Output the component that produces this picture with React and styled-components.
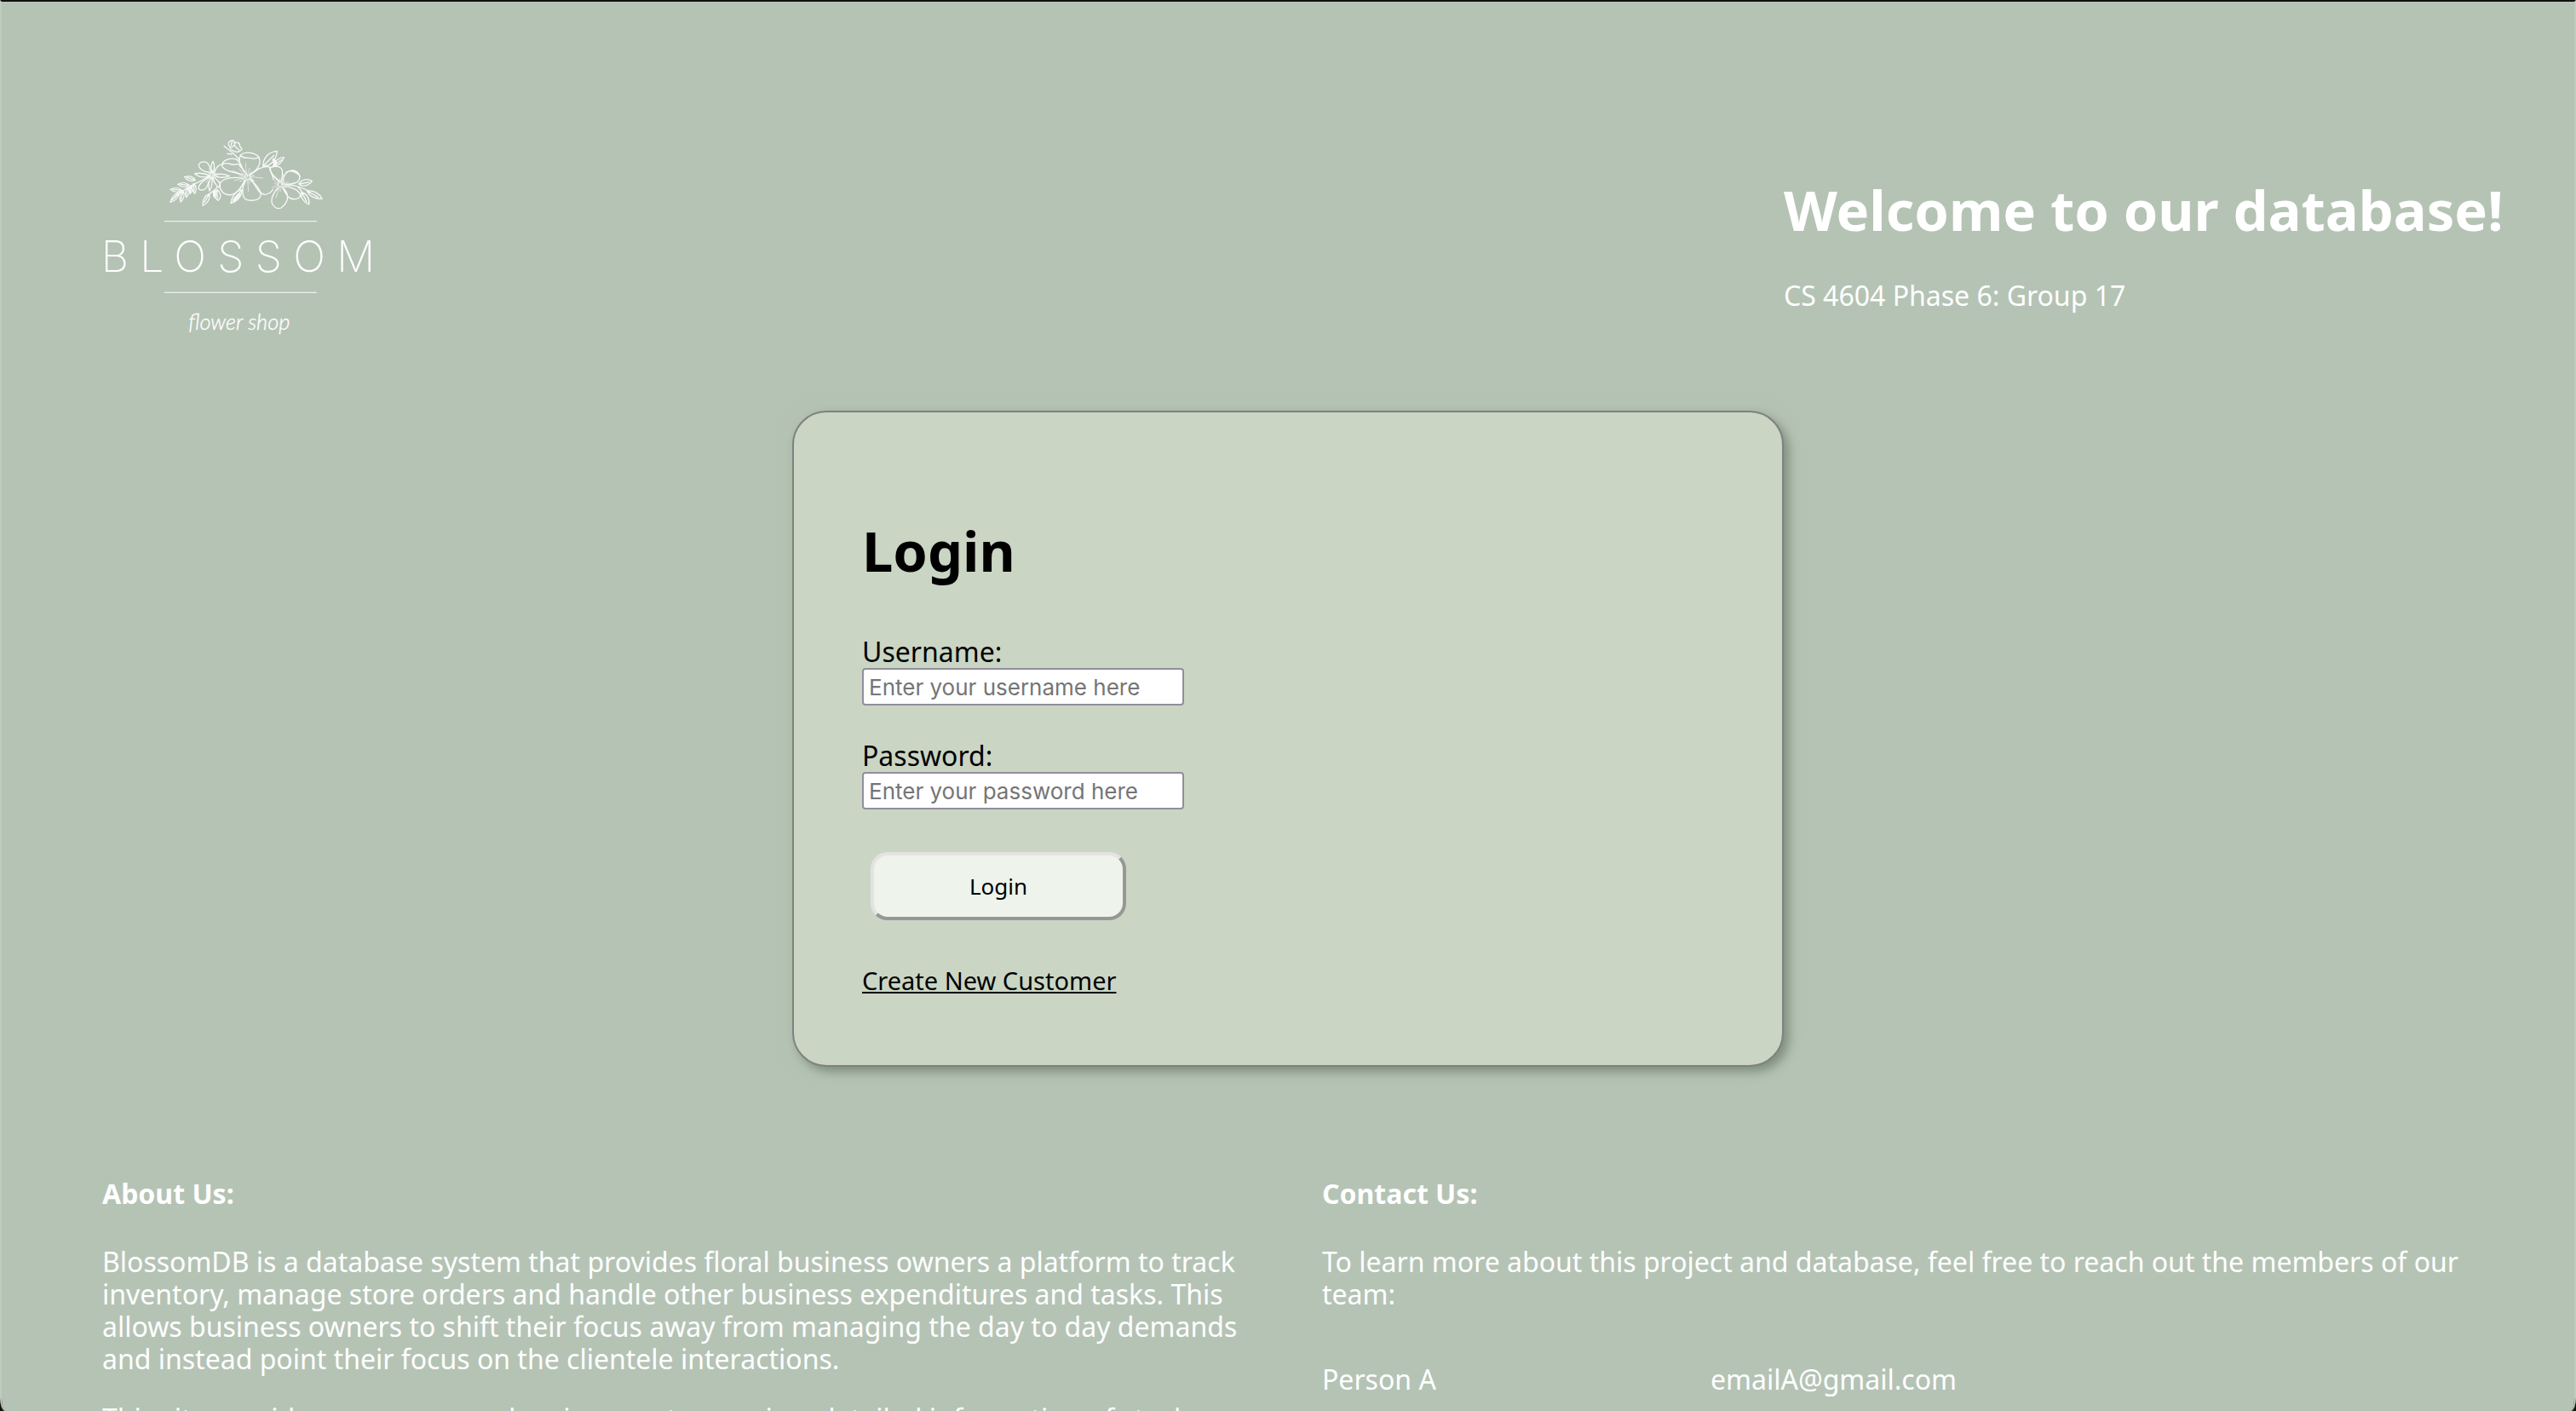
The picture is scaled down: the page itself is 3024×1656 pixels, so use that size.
import React from "react";
import styled, { createGlobalStyle } from "styled-components";

const GlobalStyle = createGlobalStyle`
  *, *::before, *::after { box-sizing: border-box; }
  html { background: #14100f; }
  body {
    margin: 0;
    font-family: "Lucida Sans", "Lucida Grande", "Noto Sans", sans-serif;
    font-size: 32px;
    line-height: 38px;
    color: #fff;
  }
`;

const Page = styled.div`
  height: 100vh;
  overflow-y: auto;
  scrollbar-width: none;
  background: #b5c3b5;
  border: 2px solid #bfccc0;
  border-top-color: #14100f;
  border-bottom: 0;
  border-radius: 0 0 6px 6px / 0 0 16px 16px;
`;

const Header = styled.header`
  display: flex;
  justify-content: space-between;
  align-items: flex-start;
  padding: 158px 78px 78px 118px;
`;

const Logo = styled.svg`
  display: block;
  width: 324px;
  height: 244px;
  overflow: visible;
  fill: none;
  stroke: #fff;
  stroke-linecap: round;
  stroke-linejoin: round;
`;

const Wordmark = styled.text`
  font-family: Inter, Lato, sans-serif;
  font-size: 150px;
  font-weight: 200;
  letter-spacing: 40px;
  fill: #fff;
  stroke: none;
`;

const Tagline = styled.text`
  font-family: Lato, sans-serif;
  font-size: 76px;
  font-style: italic;
  font-weight: 300;
  fill: #fff;
  stroke: #fff;
  stroke-width: 1px;
`;

const Welcome = styled.div`
  min-width: 850px;
  padding-top: 46px;
`;

const Title = styled.h1`
  margin: 0;
  font-size: 65px;
  line-height: 80px;
  font-weight: 700;
`;

const Text = styled.p`
  margin: ${(p) => p.$gap || 0}px 0 0;
`;

const Card = styled.main`
  width: 1164px;
  margin: 0 auto;
  padding: 122px 80px 80px;
  color: #000;
  background: #cad5c4;
  border: 2px solid #808080;
  border-radius: 40px;
  box-shadow: 6px 6px 12px rgba(100, 115, 100, 0.65), 0 0 20px rgba(170, 190, 150, 0.35);
`;

const Form = styled.form`
  display: flex;
  flex-direction: column;
  align-items: flex-start;
  margin-top: 60px;
`;

const Field = styled.div`
  display: flex;
  flex-direction: column;
  margin-bottom: 40px;
`;

const Input = styled.input`
  width: 378px;
  height: 44px;
  padding: 2px 6px;
  font-family: Inter, sans-serif;
  font-size: 26px;
  color: #000;
  background: #fff;
  border: 2px solid #8f8f9d;
  border-radius: 4px;
  &::placeholder { color: #757575; opacity: 1; }
`;

const Button = styled.button`
  width: 300px;
  height: 80px;
  margin: 10px;
  padding: 0;
  font-family: inherit;
  font-size: 26px;
  color: #000;
  background: #eef3ec;
  border: 4px solid;
  border-color: #e3e3e3 #979797 #979797 #e3e3e3;
  border-radius: 20px;
`;

const Link = styled.a`
  margin-top: 42px;
  font-size: 29px;
  line-height: 38px;
  color: #000;
  text-decoration: underline;
`;

const Footer = styled.footer`
  display: grid;
  grid-template-columns: 1fr 1fr;
  gap: 80px;
  padding: 130px 118px 60px;
`;

const SectionTitle = styled.h2`
  margin: 0 0 42px;
  font-size: 32px;
  line-height: 38px;
  font-weight: 700;
`;

const People = styled.table`
  margin-top: 62px;
  width: 100%;
  border-collapse: collapse;
  table-layout: fixed;
  td { padding: 0; }
  td:first-child { width: 456px; }
`;

// A pointed leaf from its base (x1, y1) to its tip (x2, y2), with a midrib.
function leaf([x1, y1, x2, y2, w]) {
  const dx = x2 - x1;
  const dy = y2 - y1;
  const len = Math.hypot(dx, dy);
  const nx = (-dy / len) * w;
  const ny = (dx / len) * w;
  const at = (t, s) => `${(x1 + dx * t + nx * s).toFixed(1)} ${(y1 + dy * t + ny * s).toFixed(1)}`;
  return `M${at(0, 0)}C${at(0.25, 1)} ${at(0.65, 1)} ${at(1, 0)}C${at(0.7, -1)} ${at(0.3, -1)} ${at(0, 0)}L${at(0.75, 0.1)}`;
}

// Fine strokes that radiate from the heart of a flower.
function rays(cx, cy, inner, lengths) {
  return lengths
    .map((length, i) => {
      const a = (i / lengths.length) * Math.PI * 2;
      const c = Math.cos(a);
      const s = Math.sin(a);
      const p = (r, k) => `${(cx + c * r - s * k).toFixed(1)} ${(cy + s * r + c * k).toFixed(1)}`;
      return `M${p(inner, 0)}Q${p(length * 0.6, 1)} ${p(length, 4)}`;
    })
    .join("");
}

const leaves = [
  [340, 250, 300, 247, 9], [332, 258, 300, 292, 9], [345, 252, 336, 291, 9],
  [366, 232, 326, 229, 9], [362, 240, 356, 275, 9], [388, 214, 350, 203, 10],
  [382, 226, 386, 262, 9], [372, 234, 370, 262, 6],
  [438, 262, 414, 304, 11], [464, 248, 468, 286, 14], [456, 250, 456, 276, 6],
  [552, 248, 513, 296, 14], [546, 262, 520, 290, 5],
  [626, 165, 676, 112, 20], [662, 165, 700, 134, 11], [672, 162, 662, 138, 6],
  [752, 228, 799, 218, 14], [762, 256, 788, 300, 13], [782, 252, 834, 280, 13],
];

const petals = [
  "M565 190C545 168 538 140 548 125C564 112 600 116 612 134C622 156 606 182 580 194M548 128C562 142 576 132 590 138C600 141 606 132 612 136",
  "M556 196C530 186 490 184 482 164C480 147 505 134 530 140C546 148 550 164 558 182M484 158C498 148 518 164 530 159C540 155 544 160 547 168",
  "M556 208C530 203 488 204 476 224C468 248 488 268 515 266C538 260 554 236 562 214",
  "M564 215C550 242 552 276 568 283C586 288 612 288 618 268C620 246 598 228 580 212",
  "M582 196C598 182 622 162 650 168M585 209C600 234 610 262 632 265C646 264 656 256 662 246M650 168C654 190 660 200 664 212",
  "M684 218C664 204 650 184 650 172C664 162 690 164 694 180C696 196 694 208 690 218",
  "M696 222C698 196 710 180 732 180C756 184 762 206 748 220C732 230 712 229 698 228M708 186C726 178 746 186 757 200",
  "M700 236C726 238 756 248 758 270C750 285 726 284 714 272C704 260 700 248 696 240",
  "M680 242C660 260 652 286 660 300C668 312 680 316 690 312C708 300 716 280 711 262C706 250 700 244 694 240",
  "M440 188C420 186 400 176 400 160C406 147 426 146 435 160C442 170 443 180 444 186",
  "M446 186C441 170 445 156 450 148C456 160 455 176 450 187",
  "M455 190C458 172 468 160 486 158",
  "M456 196C476 190 496 194 508 200C490 206 470 206 456 200",
  "M452 204C464 212 484 226 470 240C458 230 452 216 448 206",
  "M444 206C430 224 434 240 438 252C447 236 449 220 446 206",
  "M440 204C420 212 396 230 400 245C414 256 430 244 434 222",
  "M436 198C420 190 402 188 386 192C400 204 420 206 438 200",
];

const stems = [
  "M436 202C398 224 346 240 314 278",
  "M466 238C456 252 444 256 436 264",
  "M706 230C740 232 770 240 792 258M750 240C760 246 762 252 764 260",
  "M542 142C530 124 510 112 489 94M500 121L516 123",
  "M506 92C502 82 508 76 518 74C528 76 530 84 524 92C518 100 508 100 506 92M524 84C536 78 546 84 544 94L552 104C548 114 534 118 524 112C514 108 510 102 510 98M518 74L514 92M526 92C530 98 534 104 542 108",
];

function BlossomLogo() {
  return (
    <Logo viewBox="60 60 972 732" role="img" aria-label="Blossom flower shop">
      <g strokeWidth="4" opacity="0.9">
        {leaves.map((l) => <path key={l.join()} d={leaf(l)} />)}
        {petals.map((d) => <path key={d} d={d} />)}
        {stems.map((d) => <path key={d} d={d} />)}
      </g>
      <g strokeWidth="2" opacity="0.9">
        <path d={rays(570, 203, 8, [56, 30, 44, 24, 50, 28, 60, 30, 46, 28, 56, 40, 24, 50, 32, 24, 44, 26])} />
        <path d={rays(686, 230, 6, [34, 22, 40, 24, 48, 22, 30, 20, 26, 34, 20, 38, 22, 30])} />
        <path d={rays(445, 196, 5, [24, 18, 30, 16, 32, 20, 26, 18, 24, 16, 28, 18])} />
        <circle cx="574" cy="204" r="8" />
        <circle cx="567" cy="200" r="5" />
        <circle cx="686" cy="228" r="8" />
        <circle cx="445" cy="195" r="9" />
        <circle cx="445" cy="195" r="4" />
      </g>
      <path d="M280 359H814M280 610H814" strokeWidth="4" opacity="0.75" />
      <Wordmark x="56" y="538">BLOSSOM</Wordmark>
      <Tagline x="364" y="740">flower shop</Tagline>
    </Logo>
  );
}

export default function App() {
  return (
    <Page>
      <GlobalStyle />
      <Header>
        <BlossomLogo />
        <Welcome>
          <Title>Welcome to our database!</Title>
          <Text $gap={42}>CS 4604 Phase 6: Group 17</Text>
        </Welcome>
      </Header>
      <Card>
        <Title as="h2">Login</Title>
        <Form>
          <Field>
            <label htmlFor="username">Username:</label>
            <Input id="username" type="text" placeholder="Enter your username here" />
          </Field>
          <Field>
            <label htmlFor="password">Password:</label>
            <Input id="password" type="password" placeholder="Enter your password here" />
          </Field>
          <Button type="button">Login</Button>
          <Link href="#create">Create New Customer</Link>
        </Form>
      </Card>
      <Footer>
        <section>
          <SectionTitle>About Us:</SectionTitle>
          <Text>BlossomDB is a database system that provides floral business owners a platform to track inventory, manage store orders and handle other business expenditures and tasks. This allows business owners to shift their focus away from managing the day to day demands and instead point their focus on the clientele interactions.</Text>
          <Text $gap={32}>This site provides managers and various customers in a detailed information of stock</Text>
        </section>
        <section>
          <SectionTitle>Contact Us:</SectionTitle>
          <Text>To learn more about this project and database, feel free to reach out the members of our team:</Text>
          <People>
            <tbody><tr><td>Person A</td><td>emailA@gmail.com</td></tr></tbody>
          </People>
        </section>
      </Footer>
    </Page>
  );
}
